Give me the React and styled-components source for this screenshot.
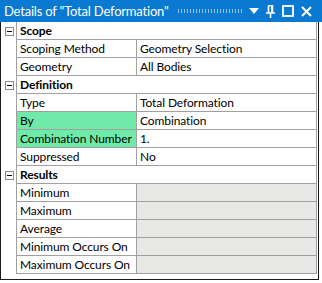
import React from "react";
import styled, { createGlobalStyle } from "styled-components";

const sections = [
  {
    title: "Scope",
    rows: [
      { label: "Scoping Method", value: "Geometry Selection" },
      { label: "Geometry", value: "All Bodies" },
    ],
  },
  {
    title: "Definition",
    rows: [
      { label: "Type", value: "Total Deformation" },
      { label: "By", value: "Combination", highlight: true },
      { label: "Combination Number", value: "1.", highlight: true },
      { label: "Suppressed", value: "No" },
    ],
  },
  {
    title: "Results",
    rows: [
      { label: "Minimum", disabled: true },
      { label: "Maximum", disabled: true },
      { label: "Average", disabled: true },
      { label: "Minimum Occurs On", disabled: true },
      { label: "Maximum Occurs On", disabled: true },
    ],
  },
];

const App = () => {
  return (
    <>
      <GlobalStyle />
      <Window>
        <TitleBar>
          <Title>Details of "Total Deformation"</Title>
          <Grip />
          <TitleIcons>
            <svg width="10" height="6" viewBox="0 0 10 6">
              <path d="M0 0 H10 L5 6 Z" fill="#fff" />
            </svg>
            <svg width="9" height="13" viewBox="0 0 9 13">
              <path
                d="M2.5 0.5 H6.5 V7.5 M2.5 0.5 V7.5 M0 8 H9 M4.5 8 V13"
                stroke="#fff"
                strokeWidth="1.6"
                fill="none"
              />
              <path d="M5 1 H6.5 V7.5 H5 Z" fill="#fff" />
            </svg>
            <svg width="12" height="12" viewBox="0 0 12 12">
              <rect x="1" y="1" width="10" height="10" stroke="#fff" strokeWidth="1.8" fill="none" />
            </svg>
            <svg width="11" height="11" viewBox="0 0 11 11">
              <path d="M1 1 L10 10 M10 1 L1 10" stroke="#fff" strokeWidth="2" />
            </svg>
          </TitleIcons>
        </TitleBar>
        <Panel>
          <Grid>
            {sections.map((section) => (
              <React.Fragment key={section.title}>
                <Gutter>
                  <Toggle>
                    <ToggleBar />
                  </Toggle>
                </Gutter>
                <HeaderCell>{section.title}</HeaderCell>
                {section.rows.map((row) => (
                  <React.Fragment key={row.label}>
                    <Gutter />
                    <LabelCell $highlight={row.highlight}>{row.label}</LabelCell>
                    <ValueCell $disabled={row.disabled}>{row.value}</ValueCell>
                  </React.Fragment>
                ))}
              </React.Fragment>
            ))}
          </Grid>
        </Panel>
      </Window>
    </>
  );
};

const GlobalStyle = createGlobalStyle`
  html, body {
    margin: 0;
    padding: 0;
    background: #ffffff;
  }
  body {
    font-family: Lato, "Noto Sans", sans-serif;
  }
`;

const Window = styled.div`
  width: 322px;
  height: 283px;
  background: #ffffff;
`;

const TitleBar = styled.div`
  display: flex;
  align-items: center;
  height: 22px;
  background: #0a79d1;
  color: #ffffff;
  padding-left: 4px;
  box-sizing: border-box;
`;

const Title = styled.div`
  font-size: 13px;
  letter-spacing: -0.2px;
  white-space: nowrap;
`;

const Grip = styled.div`
  flex: 1;
  height: 4px;
  margin: 0 7px 0 8px;
  background-image: radial-gradient(circle, rgba(150, 195, 240, 1) 0.7px, transparent 0.9px);
  background-size: 3px 2px;
`;

const TitleIcons = styled.div`
  display: flex;
  align-items: center;
  gap: 7px;
  padding-right: 10px;
`;

const Panel = styled.div`
  width: 319px;
  height: 258px;
  box-sizing: border-box;
  border: 1px solid #1a1a1a;
  border-top: none;
`;

const Grid = styled.div`
  display: grid;
  grid-template-columns: 15px 120px 181px;
  grid-auto-rows: 18px;
  font-size: 12px;
  letter-spacing: -0.1px;
  color: #000000;
`;

const Gutter = styled.div`
  background: #ffffff;
  display: flex;
  align-items: center;
  justify-content: center;
  padding-left: 1px;
`;

const Toggle = styled.div`
  width: 7px;
  height: 7px;
  border: 1px solid #8a8a8a;
  display: flex;
  align-items: center;
  justify-content: center;
`;

const ToggleBar = styled.div`
  width: 5px;
  height: 1px;
  background: #000000;
`;

const Cell = styled.div`
  box-sizing: border-box;
  display: flex;
  align-items: center;
  padding-left: 3px;
  border-left: 1px solid #a0a0a0;
  border-bottom: 1px solid #a0a0a0;
  white-space: nowrap;
  overflow: hidden;
`;

const HeaderCell = styled(Cell)`
  grid-column: 2 / 4;
  font-weight: bold;
  border-right: 1px solid #a0a0a0;
`;

const LabelCell = styled(Cell)`
  background: ${(p) => (p.$highlight ? "#6feaa8" : "#ffffff")};
`;

const ValueCell = styled(Cell)`
  border-right: 1px solid #a0a0a0;
  background: ${(p) => (p.$disabled ? "#e8e8e6" : "#ffffff")};
`;

export default App;
